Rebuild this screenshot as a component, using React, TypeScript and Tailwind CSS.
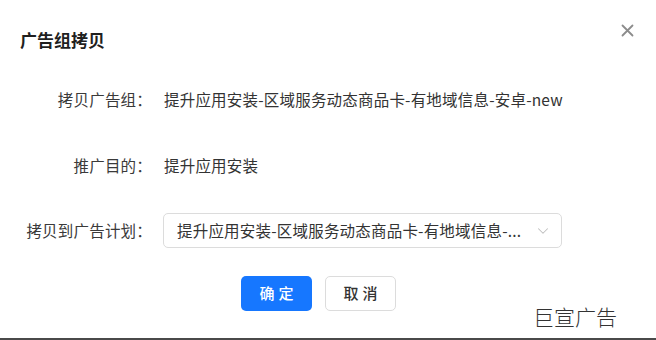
import React from "react";
import { ChevronDown } from "lucide-react";

const rowLabel = "w-[152px] shrink-0 text-right text-[#3a3a3a]";

export default function App() {
  return (
    <div
      className="relative w-[656px] h-[340px] bg-white border-b-2 border-[#4a4a4a] overflow-hidden"
      style={{ fontFamily: '"Noto Sans CJK SC", "Noto Sans", sans-serif' }}
    >
      {/* header */}
      <div className="flex items-center justify-between pl-5 pr-[22px] pt-[28px]">
        <h2 className="text-[17px] leading-[24px] font-bold text-[#1f1f1f]">广告组拷贝</h2>
        <button className="-mt-[20px] text-[#8c8c8c]">
          <svg width="13" height="13" viewBox="0 0 13 13" fill="none">
            <path d="M1.5 1.5l10 10M11.5 1.5l-10 10" stroke="currentColor" strokeWidth="1.8" strokeLinecap="round" />
          </svg>
        </button>
      </div>

      {/* form */}
      <div className="mt-[36px] flex flex-col text-[15.5px] tracking-[0.2px]">
        <div className="flex items-center h-[22px] leading-[22px]">
          <span className={rowLabel}>拷贝广告组：</span>
          <span className="ml-3 text-[#333]">提升应用安装-区域服务动态商品卡-有地域信息-安卓-new</span>
        </div>

        <div className="flex items-center h-[22px] leading-[22px] mt-[44px]">
          <span className={rowLabel}>推广目的：</span>
          <span className="ml-3 text-[#333]">提升应用安装</span>
        </div>

        <div className="flex items-center mt-[37px]">
          <span className={rowLabel}>拷贝到广告计划：</span>
          <div className="ml-[11px] w-[399px] h-[35px] flex items-center justify-between rounded-[5px] border border-[#dcdcdc] pl-[13px] pr-[9px]">
            <span className="text-[#333] truncate">提升应用安装-区域服务动态商品卡-有地域信息-...</span>
            <ChevronDown className="w-[18px] h-[18px] text-[#bfbfbf] shrink-0 ml-3" strokeWidth={1.4} />
          </div>
        </div>

        <div className="flex mt-[28px] pl-[241px] gap-[13px]">
          <button className="w-[71px] h-[35px] rounded-[5px] bg-[#1677ff] text-white text-[15px] font-medium tracking-[4px] pl-[4px]">
            确定
          </button>
          <button className="w-[71px] h-[35px] rounded-[5px] border border-[#dcdcdc] bg-white text-[#333] text-[15px] font-medium tracking-[4px] pl-[4px]">
            取消
          </button>
        </div>
      </div>

      {/* watermark */}
      <div className="absolute left-[533px] top-[302px] text-[21px] leading-[28px] text-[#333] font-light">
        巨宣广告
      </div>
    </div>
  );
}
